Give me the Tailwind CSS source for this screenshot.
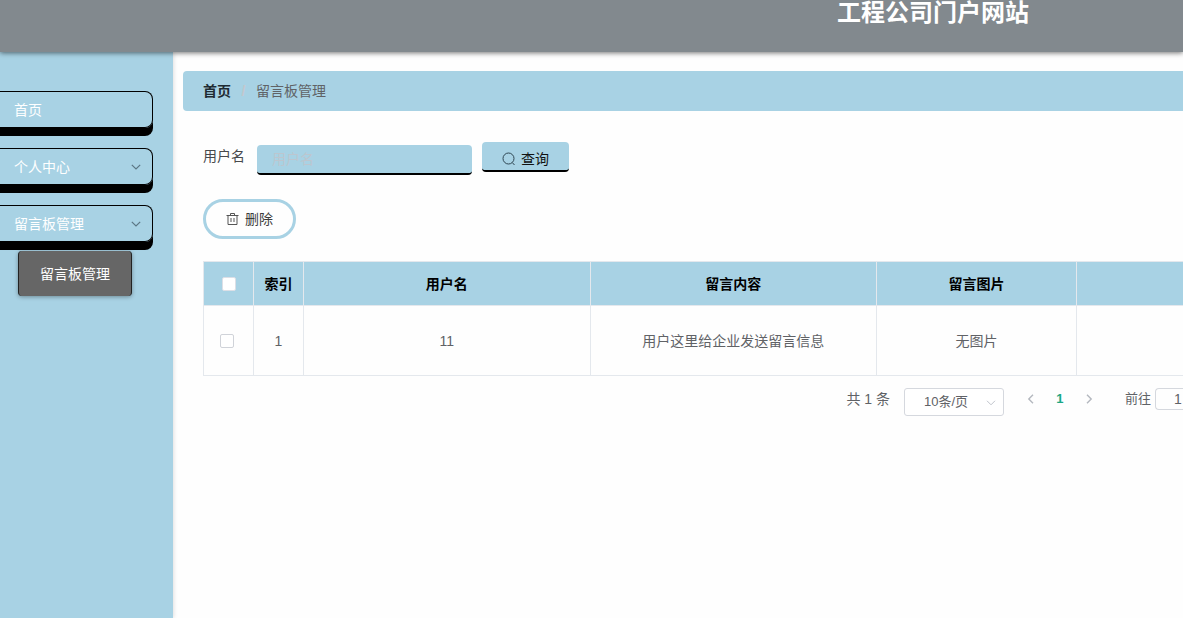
<!DOCTYPE html>
<html lang="zh-CN">
<head>
  <meta charset="UTF-8" />
  <meta name="viewport" content="width=device-width, initial-scale=1.0">
  <title>工程公司门户网站</title>
  <script src="https://cdn.jsdelivr.net/npm/@tailwindcss/browser@4"></script>
</head>
<body class="bg-[#fefefe] text-sm text-[#606266] min-h-screen flex flex-col overflow-x-hidden font-['Liberation_Sans','Noto_Sans_CJK_SC',sans-serif]">

  <!-- Header -->
  <header class="relative z-10 h-[52px] bg-[#82898e] flex items-start justify-end pr-[154px] shadow-[0_1px_5px_rgba(0,0,0,0.55)]">
    <h1 class="text-2xl leading-[26px] font-bold text-white">工程公司门户网站</h1>
  </header>

  <div class="flex flex-1">

    <!-- Sidebar -->
    <aside class="w-[173px] shrink-0 bg-[#a8d2e4] pt-[39px] pr-5 shadow-[1px_0_4px_rgba(0,0,0,0.12)]">
      <nav class="space-y-5">
        <a href="#" class="flex items-center h-[37px] pl-3.5 pr-3 text-white border border-l-0 border-black rounded-r-lg shadow-[0_8px_0_#000]">首页</a>
        <button type="button" class="flex items-center justify-between w-full h-[37px] pl-3.5 pr-[11px] text-white border border-l-0 border-black rounded-r-lg shadow-[0_8px_0_#000]">
          个人中心
          <svg class="w-2.5 h-2.5 text-[#5b7684]" viewBox="0 0 10 10" fill="none" stroke="currentColor" stroke-width="1.2"><path d="M0.8 2.8 5 7 9.2 2.8" /></svg>
        </button>
        <button type="button" class="flex items-center justify-between w-full h-[37px] pl-3.5 pr-[11px] text-white border border-l-0 border-black rounded-r-lg shadow-[0_8px_0_#000]">
          留言板管理
          <svg class="w-2.5 h-2.5 text-[#5b7684]" viewBox="0 0 10 10" fill="none" stroke="currentColor" stroke-width="1.2"><path d="M0.8 2.8 5 7 9.2 2.8" /></svg>
        </button>
      </nav>
      <a href="#" class="mt-[9px] ml-[18px] mr-[21px] flex items-center justify-center h-[45px] bg-[#666] text-white border-x border-[#222] rounded-sm shadow-[0_1px_4px_rgba(0,0,0,0.35)]">留言板管理</a>
    </aside>

    <main class="flex-1 min-w-0 pt-[19px] pl-2.5">

      <!-- Breadcrumb -->
      <nav class="flex items-center h-10 pl-5 bg-[#a8d2e4] rounded-l">
        <a href="#" class="font-bold text-[#1f2b33]">首页</a>
        <span class="w-[25px] text-center font-bold text-[#c4c7cc]">/</span>
        <span>留言板管理</span>
      </nav>

      <div class="pl-5">

        <!-- Search -->
        <form class="flex items-start pt-[31px]">
          <label for="username" class="w-[54px] leading-7 text-[#48494c]">用户名</label>
          <input id="username" type="text" placeholder="用户名" class="mt-[3px] w-[215px] h-[30px] px-[15px] bg-[#a8d2e4] border-b-2 border-black rounded placeholder:text-[#bcc6cf] outline-none" />
          <button type="button" class="ml-2.5 w-[87px] h-[30px] pt-1.5 flex items-center justify-center gap-[5px] bg-[#a8d2e4] border-b-2 border-black rounded text-[#111]">
            <svg class="w-3.5 h-3.5 text-[#2f4652]" viewBox="0 0 14 14" fill="none" stroke="currentColor"><circle cx="6.5" cy="6.5" r="5.5" /><path d="M10.3 10.6 12.5 13" /></svg>
            查询
          </button>
        </form>

        <button type="button" class="mt-6 w-[93px] h-10 flex items-center justify-center gap-[5px] border-3 border-[#a8d2e4] rounded-full text-[#3c3c3c]">
          <svg class="w-3.5 h-3.5 text-[#555]" viewBox="0 0 14 14" fill="none" stroke="currentColor"><path d="M0.5 3.5h12M2 3.5v9h9v-9M4.5 3V1.5h4V3M5 6v4M8 6v4" /></svg>
          删除
        </button>

        <!-- Messages -->
        <table class="mt-[22px] w-full table-fixed border-separate border-spacing-0 border-t border-l border-[#e4e8ed] text-center">
          <colgroup>
            <col class="w-[50px]" />
            <col class="w-[50px]" />
            <col />
            <col />
            <col class="w-[200px]" />
            <col class="w-[106px]" />
          </colgroup>
          <thead>
            <tr class="h-[44px] bg-[#a8d2e4] text-black">
              <th class="border-r border-b border-[#e4e8ed]"><input type="checkbox" aria-label="全选" class="block mx-auto w-3.5 h-3.5 appearance-none bg-white border border-[#dcdfe6] rounded-xs" /></th>
              <th class="border-r border-b border-[#e4e8ed]">索引</th>
              <th class="border-r border-b border-[#e4e8ed]">用户名</th>
              <th class="border-r border-b border-[#e4e8ed]">留言内容</th>
              <th class="border-r border-b border-[#e4e8ed]">留言图片</th>
              <th class="border-b border-[#e4e8ed]"></th>
            </tr>
          </thead>
          <tbody>
            <tr class="h-[70px]">
              <td class="border-r border-b border-[#e4e8ed] pr-1"><input type="checkbox" aria-label="选择" class="block mx-auto w-3.5 h-3.5 appearance-none bg-white border border-[#d0d3d9] rounded-xs" /></td>
              <td class="border-r border-b border-[#e4e8ed]">1</td>
              <td class="border-r border-b border-[#e4e8ed]">11</td>
              <td class="border-r border-b border-[#e4e8ed]">用户这里给企业发送留言信息</td>
              <td class="border-r border-b border-[#e4e8ed]">无图片</td>
              <td class="border-b border-[#e4e8ed]"></td>
            </tr>
          </tbody>
        </table>

        <!-- Pagination -->
        <div class="flex items-start justify-end pt-3 leading-[22px]">
          <span class="mr-3.5">共 1 条</span>
          <div class="relative w-[100px]">
            <select aria-label="每页条数" class="block w-full h-7 pl-[19px] appearance-none bg-white border border-[#d5d8de] rounded-[3px] text-[13px]">
              <option>10条/页</option>
            </select>
            <svg class="absolute right-2 top-2.5 w-2.5 h-2.5 text-[#c0c4cc] pointer-events-none" viewBox="0 0 10 10" fill="none" stroke="currentColor"><path d="M1 2.8 5 6.8 9 2.8" /></svg>
          </div>
          <button type="button" aria-label="上一页" class="ml-[22px] w-2.5 h-[22px] flex items-center text-[#b4b8bf]">
            <svg class="w-2.5 h-2.5" viewBox="0 0 10 10" fill="none" stroke="currentColor" stroke-width="1.4"><path d="M7 0.8 2.8 5 7 9.2" /></svg>
          </button>
          <button type="button" class="w-12 h-[22px] text-[13px] font-bold text-[#1ba784]">1</button>
          <button type="button" aria-label="下一页" class="w-2.5 h-[22px] flex items-center text-[#b4b8bf]">
            <svg class="w-2.5 h-2.5" viewBox="0 0 10 10" fill="none" stroke="currentColor" stroke-width="1.4"><path d="M3 0.8 7.2 5 3 9.2" /></svg>
          </button>
          <label for="page" class="ml-[31px] mr-1 text-[13px]">前往</label>
          <input id="page" type="text" value="1" class="w-7 h-[22px] pl-[18px] border border-r-0 border-[#d5d8de] rounded-l" />
        </div>

      </div>
    </main>
  </div>

</body>
</html>
